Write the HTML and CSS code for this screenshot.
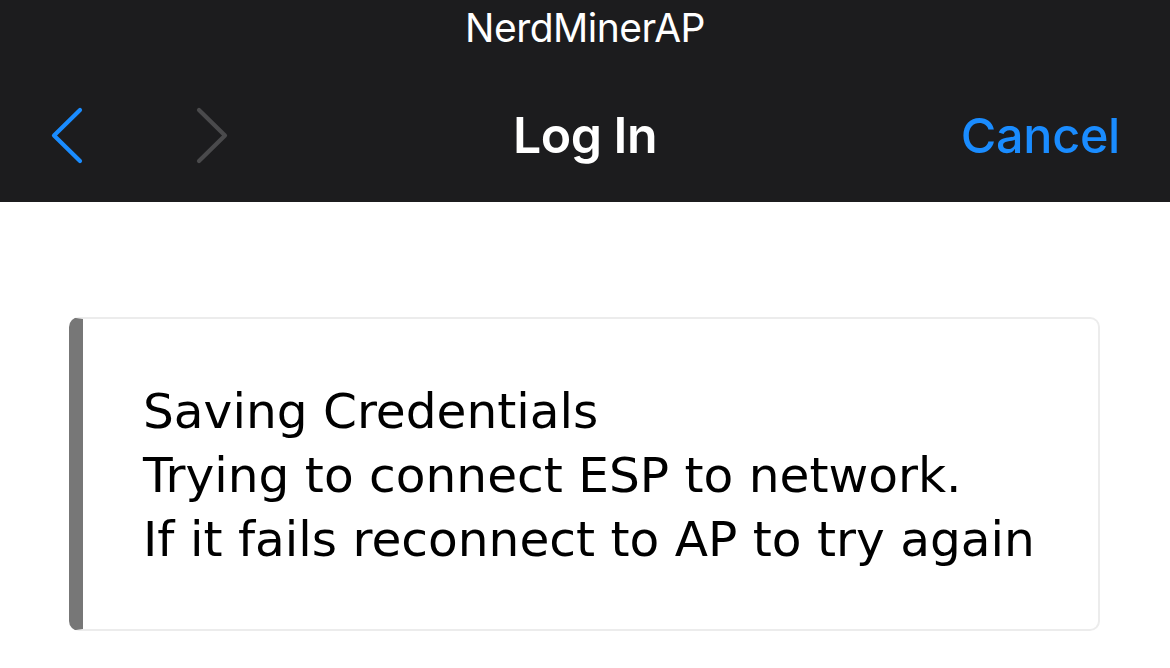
FILE: index.html
```html
<!DOCTYPE html>
<html>
<head>
<meta charset="utf-8">
<title>Log In</title>
<link rel="stylesheet" href="styles.css">
</head>
<body>
<header class="header">
  <div class="ssid">NerdMinerAP</div>
  <div class="nav">
    <div class="nav-left">
      <svg class="chev" width="40" height="60" viewBox="0 0 40 60"><path d="M30 5 L4 30.5 L30 56" fill="none" stroke="#1a8cff" stroke-width="4.2" stroke-linecap="round" stroke-linejoin="round"/></svg>
      <svg class="chev" width="40" height="60" viewBox="0 0 40 60"><path d="M6 5 L32 30.5 L6 56" fill="none" stroke="#4a4a4c" stroke-width="4.2" stroke-linecap="round" stroke-linejoin="round"/></svg>
    </div>
    <div class="nav-title">Log In</div>
    <div class="nav-right"><span class="cancel">Cancel</span></div>
  </div>
</header>
<main class="content">
  <div class="msg">
    <div class="line">Saving Credentials</div>
    <div class="line">Trying to connect ESP to network.</div>
    <div class="line">If it fails reconnect to AP to try again</div>
  </div>
</main>
</body>
</html>
```
FILE: styles.css
```css
html, body {
  margin: 0;
  padding: 0;
  background: #ffffff;
}
.header {
  background: #1c1c1e;
  height: 202px;
  display: flex;
  flex-direction: column;
  font-family: Inter, "Noto Sans", sans-serif;
}
.ssid {
  height: 60px;
  box-sizing: border-box;
  display: flex;
  align-items: center;
  justify-content: center;
  color: #ffffff;
  font-size: 39px;
  font-weight: 400;
  letter-spacing: -0.5px;
  padding-bottom: 6px;
}
.nav {
  flex: 1;
  display: grid;
  grid-template-columns: 1fr auto 1fr;
  align-items: center;
  padding: 8px 50px 0 50px;
}
.nav-left {
  display: flex;
  align-items: center;
  gap: 103px;
}
.chev {
  display: block;
}
.nav-title {
  color: #ffffff;
  font-size: 50px;
  font-weight: 600;
  letter-spacing: -0.5px;
}
.nav-right {
  display: flex;
  justify-content: flex-end;
}
.cancel {
  color: #1a8cff;
  font-size: 48.5px;
  font-weight: 500;
  letter-spacing: -0.3px;
}
.content {
  padding: 115px 69px 0 69px;
}
.msg {
  width: 1031px;
  box-sizing: border-box;
  height: 314px;
  border: 2px solid #ececec;
  border-left: 14px solid #777777;
  border-radius: 10px;
  padding: 60px 20px 0 60px;
  font-family: "DejaVu Sans", Verdana, sans-serif;
  font-size: 48.6px;
  line-height: 64px;
  color: #000000;
}
```
